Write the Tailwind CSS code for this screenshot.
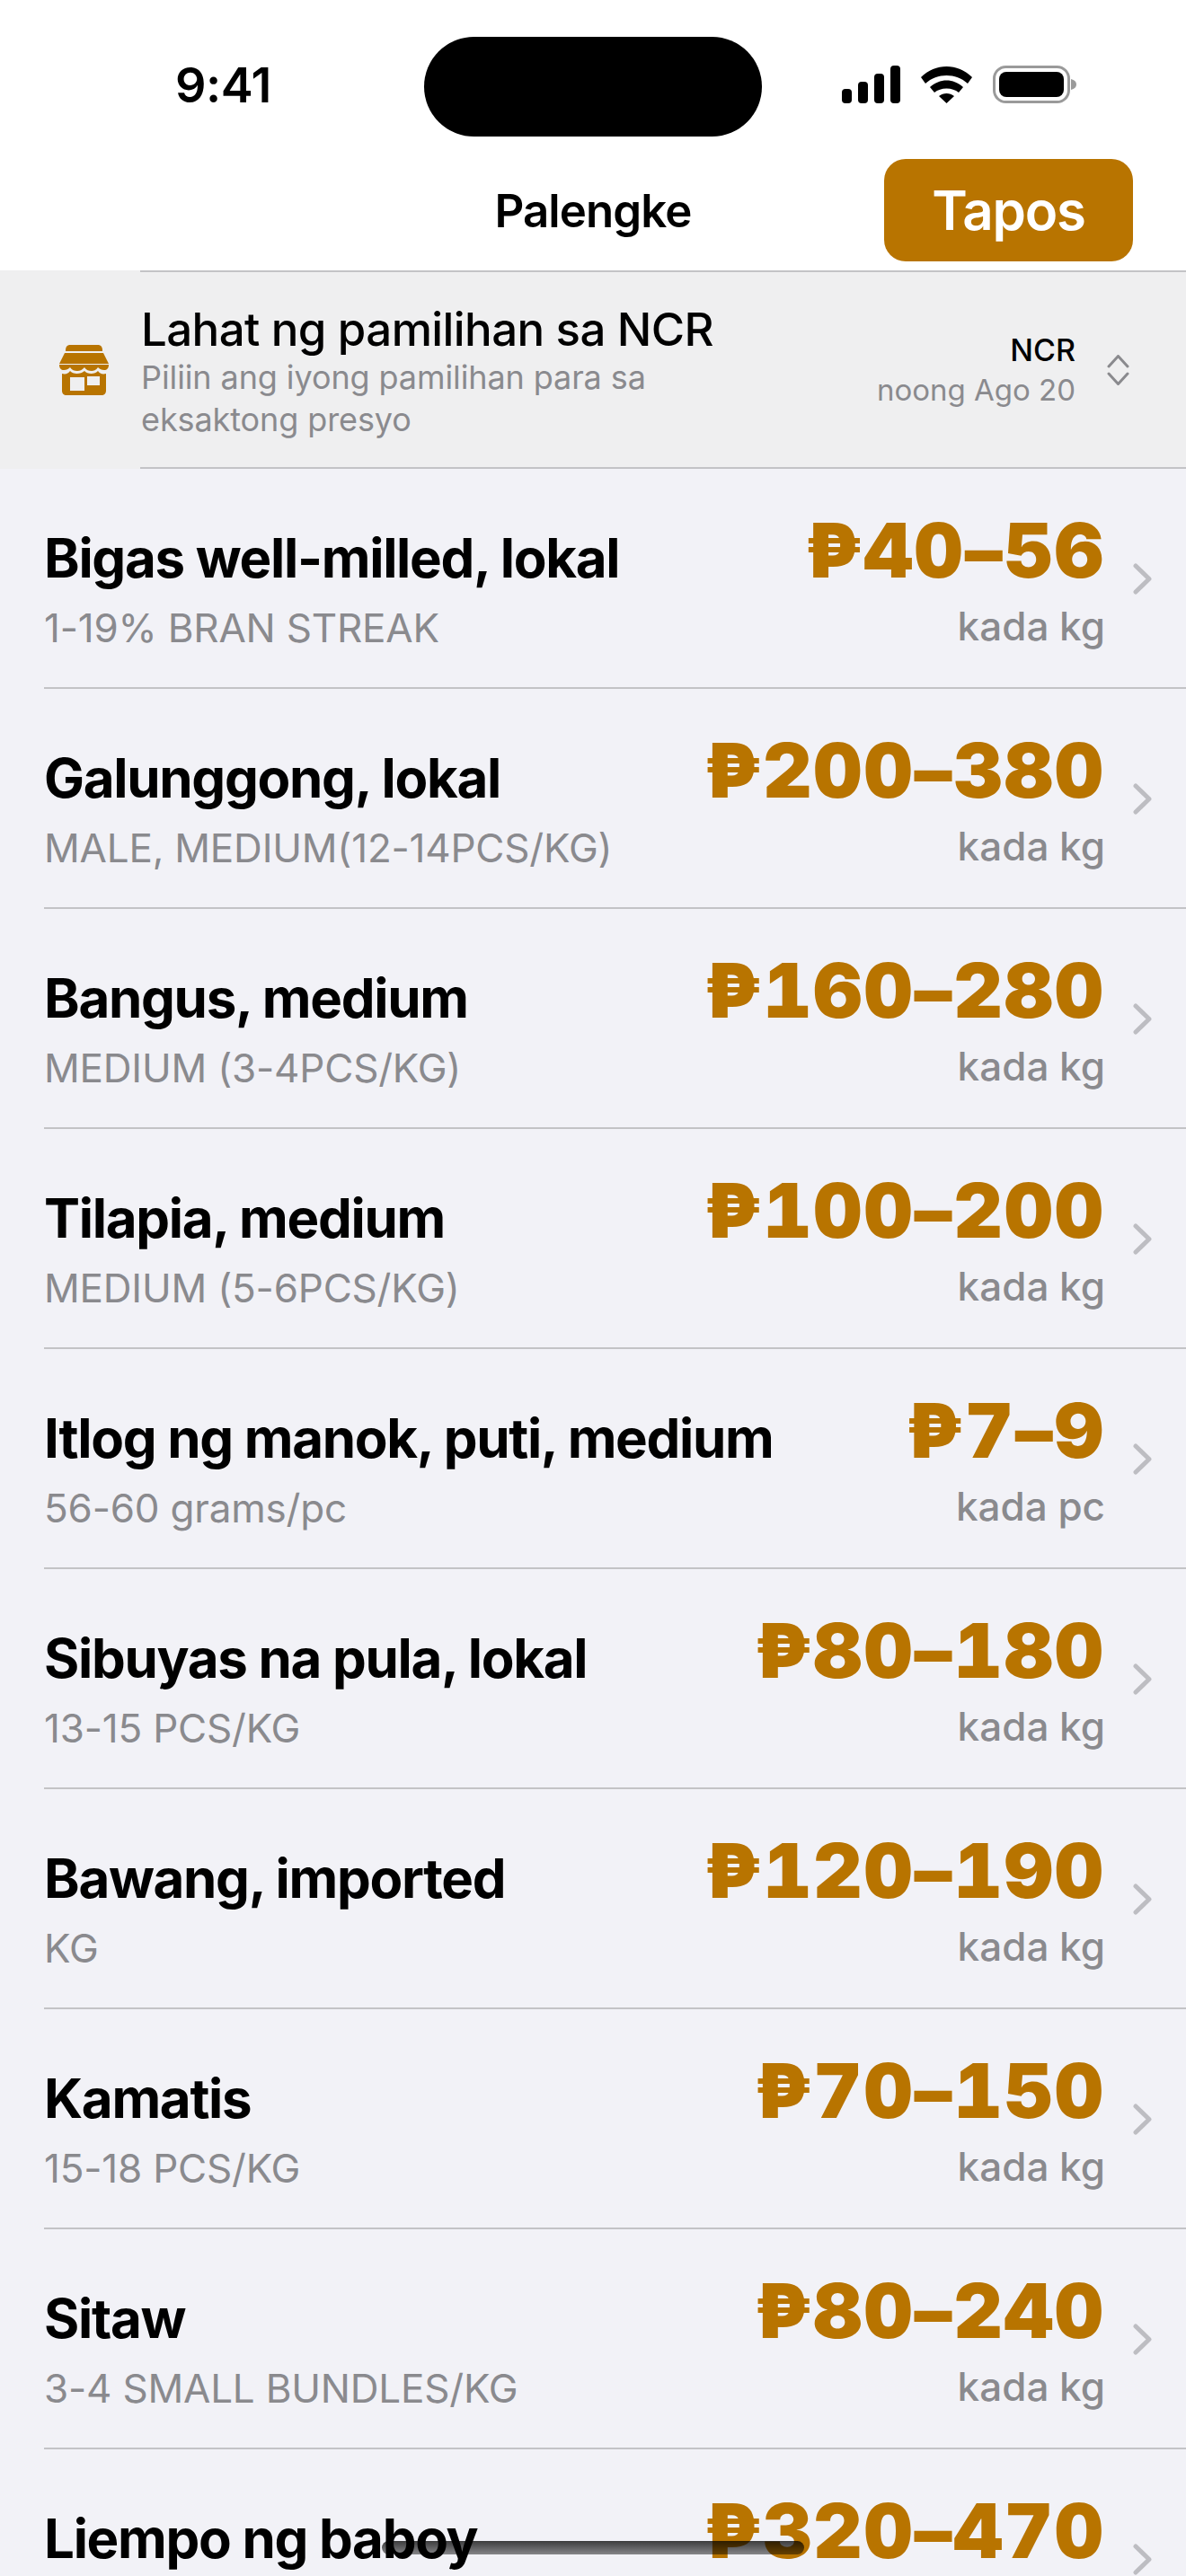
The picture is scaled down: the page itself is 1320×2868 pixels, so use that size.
<!DOCTYPE html>
<html><head><meta charset="utf-8"><script src="https://cdn.jsdelivr.net/npm/@tailwindcss/browser@4"></script></head>
<body class="font-['Inter','Liberation_Sans',sans-serif] bg-[#f2f2f7]">
<div class="relative w-[1320px] h-[2868px] overflow-hidden bg-[#f2f2f7]">
  <header class="bg-white h-[302px] flex flex-col">
    <div class="h-[177px] relative flex items-start">
      <span class="ml-[195px] mt-[62px] text-[54px] leading-[66px] font-semibold tracking-[-0.5px] text-black">9:41</span>
      <div class="absolute left-[472px] top-[41px] w-[376px] h-[111px] rounded-full bg-black"></div>
      <div class="absolute left-[937px] top-[73px] flex items-end">
        <svg width="261" height="42" viewBox="0 0 261 42" fill="#000">
          <rect x="0" y="26" width="11" height="16" rx="4"/><rect x="18" y="18" width="11" height="24" rx="4"/><rect x="36" y="9" width="11" height="33" rx="4"/><rect x="54" y="0" width="11" height="42" rx="4"/>
          <path d="M88 13 L93 20 C106 8 127 8 140 20 L145 13 C129 -3 104 -3 88 13Z M98 24 L103 30 C110 24 123 24 130 30 L135 24 C124 14 109 14 98 24Z M108 34 L116.500 42 L125 34 C120 30 113 30 108 34Z"/>
          <rect x="169.500" y="1.500" width="83" height="39" rx="13" fill="none" stroke="#9a9a9a" stroke-width="3"/>
          <rect x="175" y="7" width="72" height="28" rx="8"/>
          <path d="M255 15 C259 16 261 18 261 21 C261 24 259 26 255 27Z" fill="#9a9a9a"/>
        </svg>
      </div>
    </div>
    <div class="relative h-[125px]">
      <div class="absolute left-0 right-0 top-[27px] text-center text-[51px] leading-[62px] font-semibold tracking-[-0.9px] text-black">Palengke</div>
      <div class="absolute left-[984px] top-0 w-[277px] h-[114px] rounded-[24px] bg-[#b87400] flex items-center justify-center text-[60px] font-semibold tracking-[-1.2px] text-white">Tapos</div>
    </div>
  </header>

  <section class="-mt-[1px] relative h-[221px] bg-[#efeff0] flex items-center">
    <div class="absolute left-[156px] right-0 top-0 h-[2px] bg-[#c3c3c6]"></div>
    <div class="absolute left-[156px] right-0 bottom-0 h-[2px] bg-[#c3c3c6]"></div>
    <svg class="ml-[66px] shrink-0" width="55" height="56" viewBox="0 0 55 56" fill="#b87400">
      <path d="M7 6 C7 2 9 0 12 0 H43 C46 0 48 2 48 6 V7 H7Z"/>
      <path d="M6 9 H49 L55 21 H0Z"/>
      <path d="M0 22 H55 C55 26 53 28 50 28 C47 28 45 27 43 25 C41 28 38 29 36 29 C33 29 30 28 28 25 C25 28 23 29 20 29 C17 29 14 28 12 25 C10 27 8 28 5 28 C2 28 0 26 0 22Z"/>
      <path fill-rule="evenodd" d="M3 32 C7 33 10 32 12 29 C15 33 24 33 28 29 C31 33 40 33 43 29 C45 32 48 33 52 32 V51 C52 54 50 56 47 56 H8 C5 56 3 54 3 51Z M12 36 V51 H28 V36Z M31 35 V45 H45 V35Z"/>
    </svg>
    <div class="ml-[36px] w-[700px] mt-[4px]">
      <div class="text-[51px] leading-[60px] font-medium tracking-[-0.6px] text-black">Lahat ng pamilihan sa NCR</div>
      <div class="text-[36px] leading-[47px] tracking-[-0.1px] text-[#8a8a8e]">Piliin ang iyong pamilihan para sa eksaktong presyo</div>
    </div>
    <div class="ml-auto text-right -mr-[10px] mt-[0px]">
      <div class="text-[34px] leading-[44px] font-medium text-black">NCR</div>
      <div class="text-[33px] leading-[44px] text-[#8a8a8e]">noong Ago 20</div>
    </div>
    <svg class="ml-[45px] mr-[63px] shrink-0" width="25" height="34" viewBox="0 0 25 34" fill="none" stroke="#8a8a8e" stroke-width="3" stroke-linecap="round" stroke-linejoin="round">
      <path d="M2 13 L12.500 1.500 L23 13"/><path d="M2 21 L12.500 32.500 L23 21"/>
    </svg>
  </section>

  <main>
    <div class="relative h-[245px] flex items-center pl-[49px]">
      <div class="mt-[22px]"><div class="text-[60px] leading-[72px] font-bold tracking-[-1.3px] text-black whitespace-nowrap">Bigas well-milled, lokal</div><div class="mt-[15px] text-[44px] leading-[54px] tracking-[-0.2px] text-[#8a8a8e]">1-19% BRAN STREAK</div></div>
      <div class="ml-auto mt-[3px] text-right"><div class="text-[84px] leading-[90px] font-black tabular-nums tracking-[2px] text-[#b87400] whitespace-nowrap">₱40–56</div><div class="mt-[12px] text-[44px] leading-[54px] font-medium text-[#8a8a8e]">kada kg</div></div>
      <svg class="ml-[31px] mr-[38px] shrink-0" width="21" height="35" viewBox="0 0 21 35" fill="none" stroke="#bdbdc2" stroke-width="5" stroke-linecap="round" stroke-linejoin="round"><path d="M3 3 L18 17.500 L3 32"/></svg>
      <div class="absolute left-[49px] right-0 bottom-0 h-[2px] bg-[#c3c3c6]"></div>
    </div>
    <div class="relative h-[245px] flex items-center pl-[49px]">
      <div class="mt-[22px]"><div class="text-[60px] leading-[72px] font-bold tracking-[-1.3px] text-black whitespace-nowrap">Galunggong, lokal</div><div class="mt-[15px] text-[44px] leading-[54px] tracking-[-0.2px] text-[#8a8a8e]">MALE, MEDIUM(12-14PCS/KG)</div></div>
      <div class="ml-auto mt-[3px] text-right"><div class="text-[84px] leading-[90px] font-black tabular-nums tracking-[2px] text-[#b87400] whitespace-nowrap">₱200–380</div><div class="mt-[12px] text-[44px] leading-[54px] font-medium text-[#8a8a8e]">kada kg</div></div>
      <svg class="ml-[31px] mr-[38px] shrink-0" width="21" height="35" viewBox="0 0 21 35" fill="none" stroke="#bdbdc2" stroke-width="5" stroke-linecap="round" stroke-linejoin="round"><path d="M3 3 L18 17.500 L3 32"/></svg>
      <div class="absolute left-[49px] right-0 bottom-0 h-[2px] bg-[#c3c3c6]"></div>
    </div>
    <div class="relative h-[245px] flex items-center pl-[49px]">
      <div class="mt-[22px]"><div class="text-[60px] leading-[72px] font-bold tracking-[-1.3px] text-black whitespace-nowrap">Bangus, medium</div><div class="mt-[15px] text-[44px] leading-[54px] tracking-[-0.2px] text-[#8a8a8e]">MEDIUM (3-4PCS/KG)</div></div>
      <div class="ml-auto mt-[3px] text-right"><div class="text-[84px] leading-[90px] font-black tabular-nums tracking-[2px] text-[#b87400] whitespace-nowrap">₱160–280</div><div class="mt-[12px] text-[44px] leading-[54px] font-medium text-[#8a8a8e]">kada kg</div></div>
      <svg class="ml-[31px] mr-[38px] shrink-0" width="21" height="35" viewBox="0 0 21 35" fill="none" stroke="#bdbdc2" stroke-width="5" stroke-linecap="round" stroke-linejoin="round"><path d="M3 3 L18 17.500 L3 32"/></svg>
      <div class="absolute left-[49px] right-0 bottom-0 h-[2px] bg-[#c3c3c6]"></div>
    </div>
    <div class="relative h-[245px] flex items-center pl-[49px]">
      <div class="mt-[22px]"><div class="text-[60px] leading-[72px] font-bold tracking-[-1.3px] text-black whitespace-nowrap">Tilapia, medium</div><div class="mt-[15px] text-[44px] leading-[54px] tracking-[-0.2px] text-[#8a8a8e]">MEDIUM (5-6PCS/KG)</div></div>
      <div class="ml-auto mt-[3px] text-right"><div class="text-[84px] leading-[90px] font-black tabular-nums tracking-[2px] text-[#b87400] whitespace-nowrap">₱100–200</div><div class="mt-[12px] text-[44px] leading-[54px] font-medium text-[#8a8a8e]">kada kg</div></div>
      <svg class="ml-[31px] mr-[38px] shrink-0" width="21" height="35" viewBox="0 0 21 35" fill="none" stroke="#bdbdc2" stroke-width="5" stroke-linecap="round" stroke-linejoin="round"><path d="M3 3 L18 17.500 L3 32"/></svg>
      <div class="absolute left-[49px] right-0 bottom-0 h-[2px] bg-[#c3c3c6]"></div>
    </div>
    <div class="relative h-[245px] flex items-center pl-[49px]">
      <div class="mt-[22px]"><div class="text-[60px] leading-[72px] font-bold tracking-[-1.3px] text-black whitespace-nowrap">Itlog ng manok, puti, medium</div><div class="mt-[15px] text-[44px] leading-[54px] tracking-[-0.2px] text-[#8a8a8e]">56-60 grams/pc</div></div>
      <div class="ml-auto mt-[3px] text-right"><div class="text-[84px] leading-[90px] font-black tabular-nums tracking-[2px] text-[#b87400] whitespace-nowrap">₱7–9</div><div class="mt-[12px] text-[44px] leading-[54px] font-medium text-[#8a8a8e]">kada pc</div></div>
      <svg class="ml-[31px] mr-[38px] shrink-0" width="21" height="35" viewBox="0 0 21 35" fill="none" stroke="#bdbdc2" stroke-width="5" stroke-linecap="round" stroke-linejoin="round"><path d="M3 3 L18 17.500 L3 32"/></svg>
      <div class="absolute left-[49px] right-0 bottom-0 h-[2px] bg-[#c3c3c6]"></div>
    </div>
    <div class="relative h-[245px] flex items-center pl-[49px]">
      <div class="mt-[22px]"><div class="text-[60px] leading-[72px] font-bold tracking-[-1.3px] text-black whitespace-nowrap">Sibuyas na pula, lokal</div><div class="mt-[15px] text-[44px] leading-[54px] tracking-[-0.2px] text-[#8a8a8e]">13-15 PCS/KG</div></div>
      <div class="ml-auto mt-[3px] text-right"><div class="text-[84px] leading-[90px] font-black tabular-nums tracking-[2px] text-[#b87400] whitespace-nowrap">₱80–180</div><div class="mt-[12px] text-[44px] leading-[54px] font-medium text-[#8a8a8e]">kada kg</div></div>
      <svg class="ml-[31px] mr-[38px] shrink-0" width="21" height="35" viewBox="0 0 21 35" fill="none" stroke="#bdbdc2" stroke-width="5" stroke-linecap="round" stroke-linejoin="round"><path d="M3 3 L18 17.500 L3 32"/></svg>
      <div class="absolute left-[49px] right-0 bottom-0 h-[2px] bg-[#c3c3c6]"></div>
    </div>
    <div class="relative h-[245px] flex items-center pl-[49px]">
      <div class="mt-[22px]"><div class="text-[60px] leading-[72px] font-bold tracking-[-1.3px] text-black whitespace-nowrap">Bawang, imported</div><div class="mt-[15px] text-[44px] leading-[54px] tracking-[-0.2px] text-[#8a8a8e]">KG</div></div>
      <div class="ml-auto mt-[3px] text-right"><div class="text-[84px] leading-[90px] font-black tabular-nums tracking-[2px] text-[#b87400] whitespace-nowrap">₱120–190</div><div class="mt-[12px] text-[44px] leading-[54px] font-medium text-[#8a8a8e]">kada kg</div></div>
      <svg class="ml-[31px] mr-[38px] shrink-0" width="21" height="35" viewBox="0 0 21 35" fill="none" stroke="#bdbdc2" stroke-width="5" stroke-linecap="round" stroke-linejoin="round"><path d="M3 3 L18 17.500 L3 32"/></svg>
      <div class="absolute left-[49px] right-0 bottom-0 h-[2px] bg-[#c3c3c6]"></div>
    </div>
    <div class="relative h-[245px] flex items-center pl-[49px]">
      <div class="mt-[22px]"><div class="text-[60px] leading-[72px] font-bold tracking-[-1.3px] text-black whitespace-nowrap">Kamatis</div><div class="mt-[15px] text-[44px] leading-[54px] tracking-[-0.2px] text-[#8a8a8e]">15-18 PCS/KG</div></div>
      <div class="ml-auto mt-[3px] text-right"><div class="text-[84px] leading-[90px] font-black tabular-nums tracking-[2px] text-[#b87400] whitespace-nowrap">₱70–150</div><div class="mt-[12px] text-[44px] leading-[54px] font-medium text-[#8a8a8e]">kada kg</div></div>
      <svg class="ml-[31px] mr-[38px] shrink-0" width="21" height="35" viewBox="0 0 21 35" fill="none" stroke="#bdbdc2" stroke-width="5" stroke-linecap="round" stroke-linejoin="round"><path d="M3 3 L18 17.500 L3 32"/></svg>
      <div class="absolute left-[49px] right-0 bottom-0 h-[2px] bg-[#c3c3c6]"></div>
    </div>
    <div class="relative h-[245px] flex items-center pl-[49px]">
      <div class="mt-[22px]"><div class="text-[60px] leading-[72px] font-bold tracking-[-1.3px] text-black whitespace-nowrap">Sitaw</div><div class="mt-[15px] text-[44px] leading-[54px] tracking-[-0.2px] text-[#8a8a8e]">3-4 SMALL BUNDLES/KG</div></div>
      <div class="ml-auto mt-[3px] text-right"><div class="text-[84px] leading-[90px] font-black tabular-nums tracking-[2px] text-[#b87400] whitespace-nowrap">₱80–240</div><div class="mt-[12px] text-[44px] leading-[54px] font-medium text-[#8a8a8e]">kada kg</div></div>
      <svg class="ml-[31px] mr-[38px] shrink-0" width="21" height="35" viewBox="0 0 21 35" fill="none" stroke="#bdbdc2" stroke-width="5" stroke-linecap="round" stroke-linejoin="round"><path d="M3 3 L18 17.500 L3 32"/></svg>
      <div class="absolute left-[49px] right-0 bottom-0 h-[2px] bg-[#c3c3c6]"></div>
    </div>
    <div class="relative h-[245px] flex items-center pl-[49px]">
      <div class="mt-[22px]"><div class="text-[60px] leading-[72px] font-bold tracking-[-1.3px] text-black whitespace-nowrap">Liempo ng baboy</div><div class="mt-[15px] h-[54px]"></div></div>
      <div class="ml-auto mt-[3px] text-right"><div class="text-[84px] leading-[90px] font-black tabular-nums tracking-[2px] text-[#b87400] whitespace-nowrap">₱320–470</div><div class="mt-[12px] h-[54px]"></div></div>
      <svg class="ml-[31px] mr-[38px] shrink-0" width="21" height="35" viewBox="0 0 21 35" fill="none" stroke="#bdbdc2" stroke-width="5" stroke-linecap="round" stroke-linejoin="round"><path d="M3 3 L18 17.500 L3 32"/></svg>
    </div>
  </main>
  <div class="absolute left-[425px] top-[2829px] w-[470px] h-[15px] rounded-full bg-gradient-to-b from-black/75 to-black/45"></div>
</div>
</body></html>
